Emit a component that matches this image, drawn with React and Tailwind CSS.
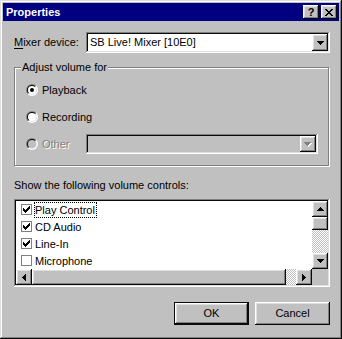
const RAISED = "shadow-[inset_-1px_-1px_#0a0a0a,inset_1px_1px_#fff,inset_-2px_-2px_#808080,inset_2px_2px_#dfdfdf]";
const SUNKEN = "shadow-[inset_-1px_-1px_#fff,inset_1px_1px_#808080,inset_-2px_-2px_#dfdfdf,inset_2px_2px_#0a0a0a]";
const DITHER = "bg-[repeating-conic-gradient(#c0c0c0_0%_25%,#fff_0%_50%)] bg-[length:2px_2px]";

const ARROWS = {
  down: { w: 7, h: 4, d: "M0 0h7v1H0zM1 1h5v1H1zM2 2h3v1H2zM3 3h1v1H3z" },
  up: { w: 7, h: 4, d: "M3 0h1v1H3zM2 1h3v1H2zM1 2h5v1H1zM0 3h7v1H0z" },
  left: { w: 4, h: 7, d: "M3 0h1v7H3zM2 1h1v5H2zM1 2h1v3H1zM0 3h1v1H0z" },
  right: { w: 4, h: 7, d: "M0 0h1v7H0zM1 1h1v5H1zM2 2h1v3H2zM3 3h1v1H3z" },
};

function Arrow({ dir, disabled }) {
  const a = ARROWS[dir];
  if (disabled) {
    return (
      <svg width={a.w + 1} height={a.h + 1} viewBox={`0 0 ${a.w + 1} ${a.h + 1}`} shapeRendering="crispEdges">
        <path d={a.d} fill="#fff" transform="translate(1 1)" />
        <path d={a.d} fill="#808080" />
      </svg>
    );
  }
  return (
    <svg width={a.w} height={a.h} viewBox={`0 0 ${a.w} ${a.h}`} shapeRendering="crispEdges">
      <path d={a.d} fill="#000" />
    </svg>
  );
}

function ScrollBtn({ dir }) {
  return (
    <div className={`w-[16px] h-[16px] shrink-0 bg-[#c0c0c0] flex items-center justify-center ${RAISED}`}>
      <Arrow dir={dir} />
    </div>
  );
}

function Combo({ value, disabled, tall }) {
  return (
    <div className={`flex-1 flex items-center p-[2px] ${tall ? "h-[21px]" : "h-[20px]"} ${SUNKEN} ${disabled ? "bg-[#c0c0c0]" : "bg-white"}`}>
      <span className="flex-1 pl-[2px] whitespace-nowrap">{value}</span>
      <div className={`w-[16px] h-full bg-[#c0c0c0] flex items-center justify-center ${RAISED}`}>
        <Arrow dir="down" disabled={disabled} />
      </div>
    </div>
  );
}

function Radio({ checked, disabled }) {
  return (
    <div className="w-[12px] h-[12px] shrink-0 rounded-full p-[1px] bg-[linear-gradient(135deg,#808080_50%,#fff_50%)]">
      <div className="w-full h-full rounded-full p-[1px] bg-[linear-gradient(135deg,#0a0a0a_50%,#dfdfdf_50%)]">
        <div className={`w-full h-full rounded-full flex items-center justify-center ${disabled ? "bg-[#c0c0c0]" : "bg-white"}`}>
          {checked && <div className="w-[4px] h-[4px] rounded-full bg-black" />}
        </div>
      </div>
    </div>
  );
}

function Check({ checked }) {
  return (
    <div className="w-[11px] h-[11px] shrink-0 border border-[#808080] bg-white flex items-center justify-center">
      {checked && (
        <svg width="7" height="7" viewBox="0 0 7 7" shapeRendering="crispEdges">
          <path d="M6 0h1v1H6zM5 1h2v1H5zM0 2h1v1H0zM4 2h3v1H4zM0 3h2v1H0zM3 3h3v1H3zM0 4h5v1H0zM1 5h3v1H1zM2 6h1v1H2z" fill="#000" />
        </svg>
      )}
    </div>
  );
}

const controls = [
  { label: "Play Control", checked: true, focus: true },
  { label: "CD Audio", checked: true },
  { label: "Line-In", checked: true },
  { label: "Microphone", checked: false },
];

export default function App() {
  return (
    <div className="w-[342px] h-[339px] bg-[#c0c0c0] p-[3px] flex flex-col font-['Liberation_Sans',Arial,sans-serif] text-[11px] leading-[13px] text-black shadow-[inset_-1px_-1px_#0a0a0a,inset_1px_1px_#dfdfdf,inset_-2px_-2px_#808080,inset_2px_2px_#fff]">
      {/* title bar */}
      <div className="h-[18px] shrink-0 bg-[#000080] flex items-center justify-between pl-[3px] pr-[2px]">
        <span className="text-white font-bold">Properties</span>
        <div className="flex gap-[2px]">
          <div className={`w-[16px] h-[14px] bg-[#c0c0c0] flex items-center justify-center font-bold text-[11px] leading-none ${RAISED}`}>?</div>
          <div className={`w-[16px] h-[14px] bg-[#c0c0c0] flex items-center justify-center ${RAISED}`}>
            <svg width="8" height="7" viewBox="0 0 8 7" shapeRendering="crispEdges">
              <path d="M0 0h2v1H0zM6 0h2v1H6zM1 1h2v1H1zM5 1h2v1H5zM2 2h4v1H2zM3 3h2v1H3zM2 4h4v1H2zM1 5h2v1H1zM5 5h2v1H5zM0 6h2v1H0zM6 6h2v1H6z" fill="#000" />
            </svg>
          </div>
        </div>
      </div>

      <div className="flex flex-col pl-[11px] pr-[9px] pt-[11px]">
        {/* mixer device */}
        <div className="flex items-center">
          <span className="w-[72px] shrink-0"><span className="underline underline-offset-2">M</span>ixer device:</span>
          <Combo value="SB Live! Mixer [10E0]" tall />
        </div>

        {/* adjust volume group */}
        <fieldset className="mt-[8px] mr-[1px] border border-[#808080] shadow-[inset_1px_1px_#fff,1px_1px_#fff] pl-[11px] pr-[10px] pt-[6px] pb-[11px]">
          <legend className="-ml-[5px] px-[1px] bg-[#c0c0c0]">Adjust volume for</legend>
          <div className="flex flex-col gap-[7px]">
            <div className="h-[20px] flex items-center">
              <Radio checked />
              <span className="ml-[4px]">Playback</span>
            </div>
            <div className="h-[20px] flex items-center">
              <Radio />
              <span className="ml-[4px]">Recording</span>
            </div>
            <div className="h-[20px] flex items-center">
              <Radio disabled />
              <span className="ml-[4px] w-[44px] shrink-0 text-[#808080] [text-shadow:1px_1px_#fff]">Other</span>
              <Combo value="" disabled />
            </div>
          </div>
        </fieldset>

        <span className="mt-[13px]">Show the following volume controls:</span>

        {/* list */}
        <div className={`mt-[7px] h-[88px] p-[2px] bg-white flex ${SUNKEN}`}>
          <div className="flex-1 flex flex-col">
            <div className="flex-1 flex flex-col">
              {controls.map((c) => (
                <div key={c.label} className="h-[17px] flex items-center pl-[5px]">
                  <Check checked={c.checked} />
                  <span className={`ml-[2px] h-[16px] border leading-[14px] pr-[1px] ${c.focus ? "border-dotted border-black" : "border-transparent"}`}>{c.label}</span>
                </div>
              ))}
            </div>
            <div className="h-[16px] flex">
              <ScrollBtn dir="left" />
              <div className={`flex-1 bg-[#c0c0c0] ${RAISED}`} />
              <div className={`w-[10px] ${DITHER}`} />
              <ScrollBtn dir="right" />
            </div>
          </div>
          <div className="w-[16px] flex flex-col">
            <ScrollBtn dir="up" />
            <div className={`h-[13px] bg-[#c0c0c0] ${RAISED}`} />
            <div className={`flex-1 ${DITHER}`} />
            <ScrollBtn dir="down" />
            <div className="h-[16px] bg-[#c0c0c0]" />
          </div>
        </div>

        {/* buttons */}
        <div className="mt-[15px] flex justify-end gap-[6px]">
          <button className="w-[75px] h-[23px] bg-[#c0c0c0] shadow-[inset_0_0_0_1px_#0a0a0a,inset_-2px_-2px_#0a0a0a,inset_2px_2px_#fff,inset_-3px_-3px_#808080,inset_3px_3px_#dfdfdf]">OK</button>
          <button className={`w-[75px] h-[23px] bg-[#c0c0c0] ${RAISED}`}>Cancel</button>
        </div>
      </div>
    </div>
  );
}
